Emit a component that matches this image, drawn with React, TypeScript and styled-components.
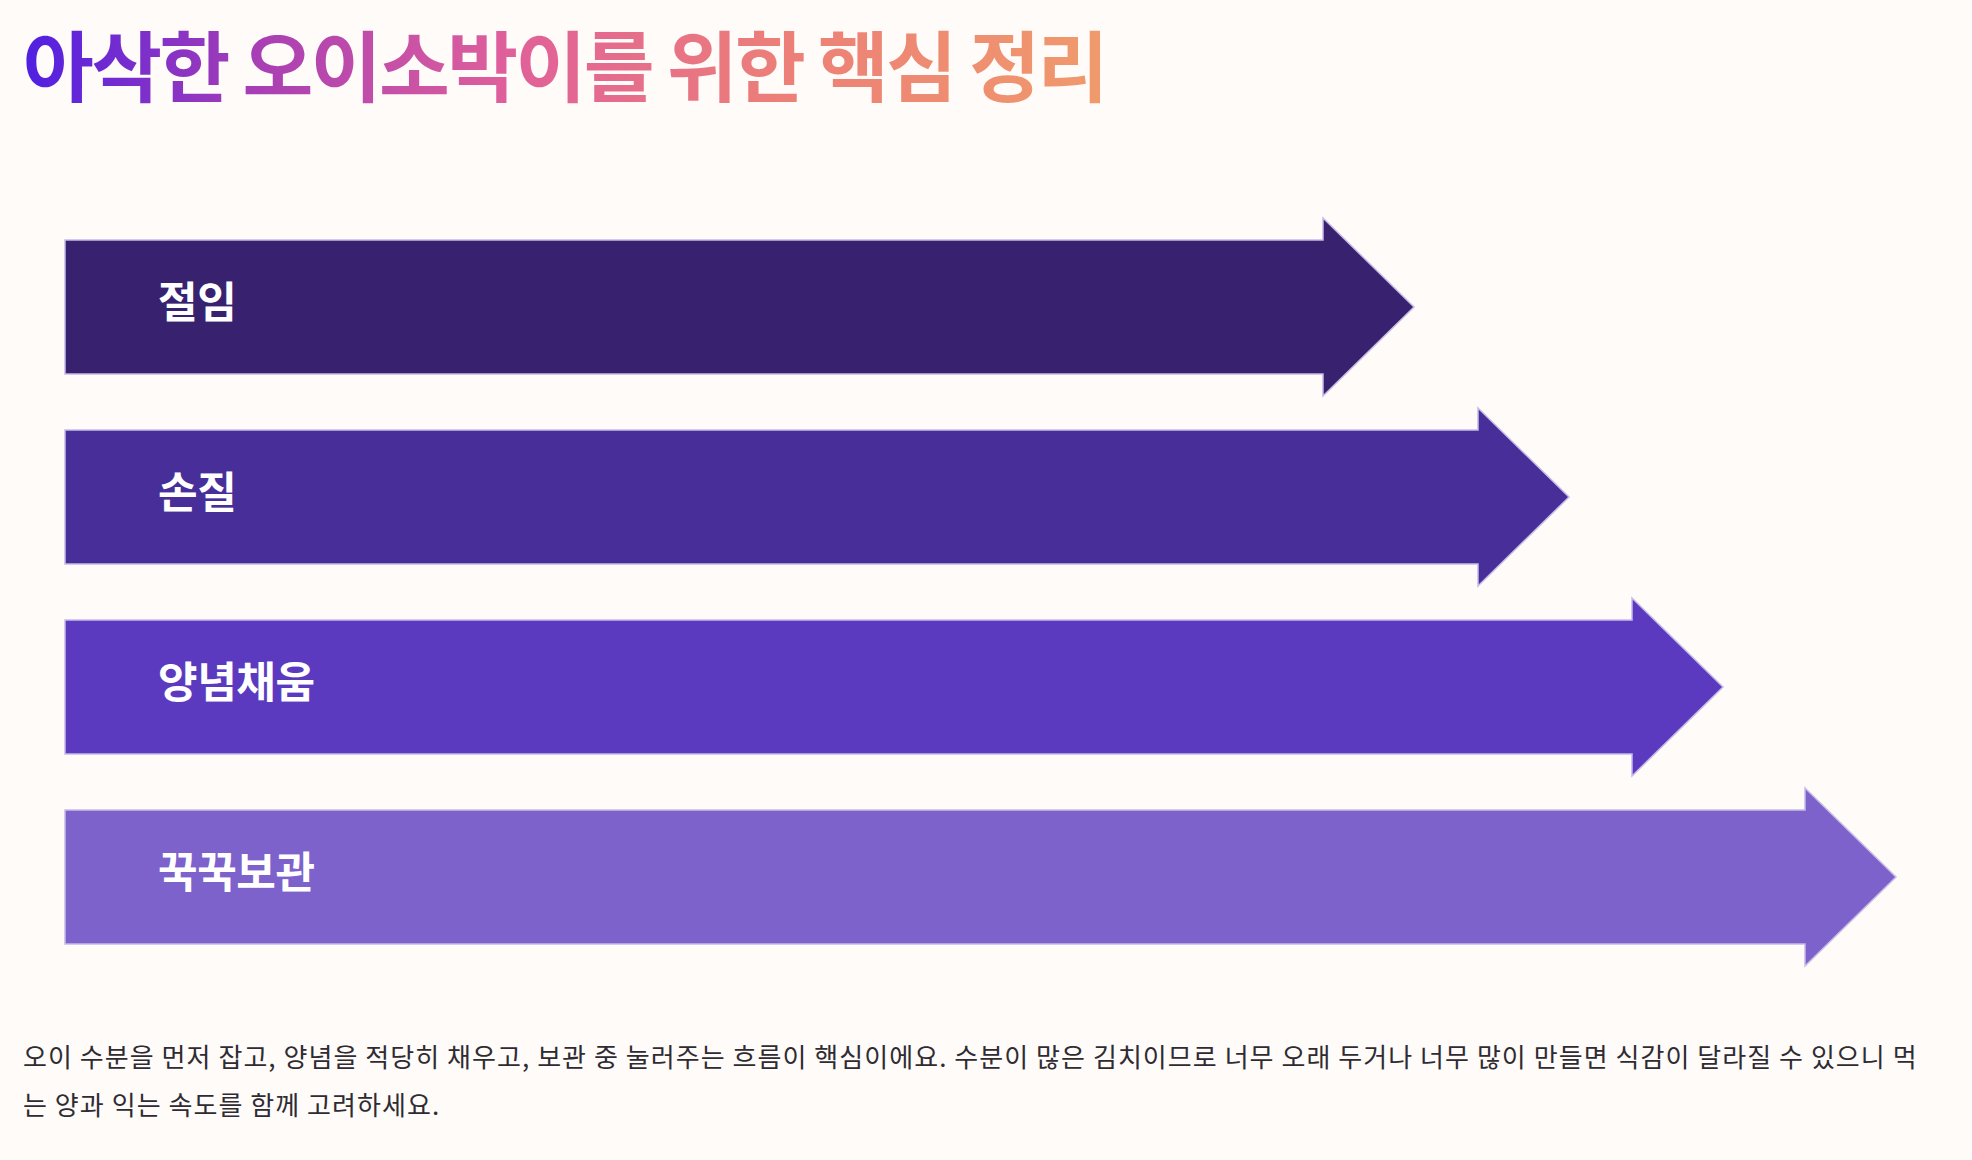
import React from "react";
import styled, { createGlobalStyle } from "styled-components";

const GlobalStyle = createGlobalStyle`
  html, body {
    margin: 0;
    padding: 0;
    background: #fefbf8;
  }
  body {
    font-family: "Noto Sans CJK KR", "Noto Sans", sans-serif;
  }
`;

const Page = styled.div`
  padding: 19px 40px 0 23px;
  display: flex;
  flex-direction: column;
`;

const Title = styled.h1`
  margin: 0;
  align-self: flex-start;
  font-size: 77px;
  line-height: 88px;
  font-weight: 700;
  letter-spacing: -0.034em;
  background: linear-gradient(90deg, #4f1fe2 0%, #a93fb4 22%, #e0609a 45%, #ec7f78 70%, #f09a6c 100%);
  -webkit-background-clip: text;
  background-clip: text;
  color: transparent;
`;

const Flow = styled.div`
  margin: 111px 0 0 42px;
  display: flex;
  flex-direction: column;
  gap: 12px;
`;

const Row = styled.div<{ $width: number }>`
  position: relative;
  width: ${(p) => p.$width}px;
  height: 178px;
  display: flex;
  align-items: center;
  padding: 0 0 17px 93px;
  box-sizing: border-box;
`;

const Shape = styled.svg`
  position: absolute;
  inset: 0;
  overflow: visible;
`;

const Label = styled.span`
  position: relative;
  color: #ffffff;
  font-size: 43px;
  font-weight: 700;
  letter-spacing: -0.01em;
`;

const Summary = styled.p`
  margin: 66px 0 0;
  font-size: 26px;
  line-height: 47.5px;
  color: #2f2b33;
  letter-spacing: 1.05px;
`;

type Step = { label: string; width: number; color: string };

const steps: Step[] = [
  { label: "절임", width: 1349, color: "#38216f" },
  { label: "손질", width: 1504, color: "#482e99" },
  { label: "양념채움", width: 1658, color: "#5b3ac0" },
  { label: "꾹꾹보관", width: 1831, color: "#7d62cc" },
];

const HEAD = 91;
const HEIGHT = 178;
const INSET = 22;

function Arrow({ label, width, color }: Step) {
  const base = width - HEAD;
  const points = [
    `0,${INSET}`,
    `${base},${INSET}`,
    `${base},0`,
    `${width},${HEIGHT / 2}`,
    `${base},${HEIGHT}`,
    `${base},${HEIGHT - INSET}`,
    `0,${HEIGHT - INSET}`,
  ].join(" ");
  return (
    <Row $width={width}>
      <Shape width={width} height={HEIGHT} viewBox={`0 0 ${width} ${HEIGHT}`}>
        <polygon points={points} fill={color} stroke="#c6bbe6" strokeWidth={1.5} />
      </Shape>
      <Label>{label}</Label>
    </Row>
  );
}

export default function App() {
  return (
    <>
      <GlobalStyle />
      <Page>
        <Title>아삭한 오이소박이를 위한 핵심 정리</Title>
        <Flow>
          {steps.map((s) => (
            <Arrow key={s.label} {...s} />
          ))}
        </Flow>
        <Summary>
          오이 수분을 먼저 잡고, 양념을 적당히 채우고, 보관 중 눌러주는 흐름이 핵심이에요. 수분이 많은 김치이므로 너무 오래 두거나 너무 많이 만들면 식감이 달라질 수 있으니 먹는 양과 익는 속도를 함께 고려하세요.
        </Summary>
      </Page>
    </>
  );
}
